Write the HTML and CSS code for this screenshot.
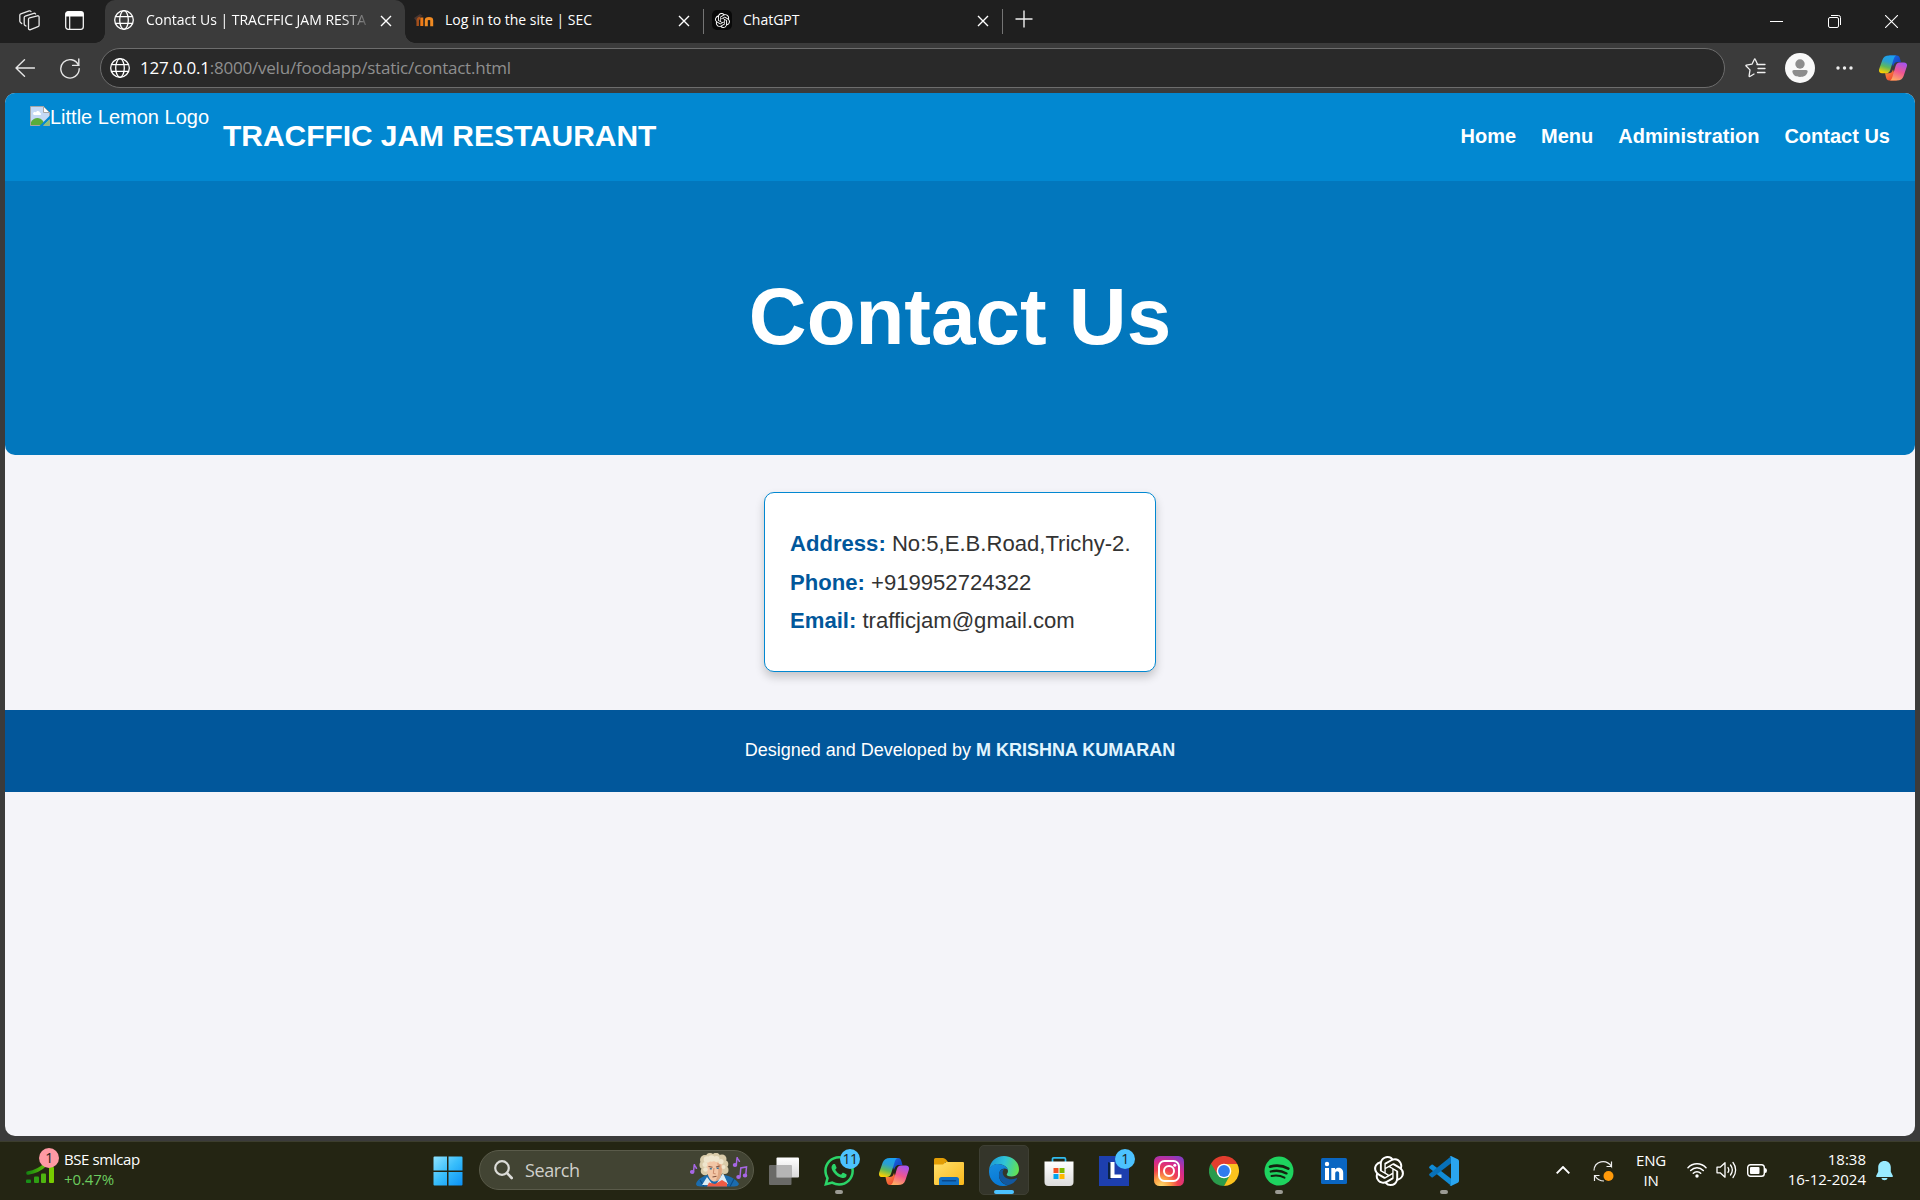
FILE: index.html
```
<!DOCTYPE html>
<html lang="en">
<head>
<meta charset="utf-8">
<title>Contact Us | TRACFFIC JAM RESTAURANT</title>
<link rel="stylesheet" href="styles.css">
</head>
<body>
<svg class="defs" width="0" height="0" aria-hidden="true">
  <defs>
    <linearGradient id="cpA" x1="0.6" y1="0" x2="0.3" y2="1"><stop offset="0" stop-color="#1aa0f0"/><stop offset=".35" stop-color="#2b9fd0"/><stop offset=".65" stop-color="#5fb95a"/><stop offset="1" stop-color="#ffd000"/></linearGradient>
    <linearGradient id="cpB" x1="0" y1="0" x2="1" y2="1"><stop offset="0" stop-color="#1c6fe8"/><stop offset="1" stop-color="#1236b8"/></linearGradient>
    <linearGradient id="cpC" x1="0.7" y1="0" x2="0.3" y2="1"><stop offset="0" stop-color="#a653ee"/><stop offset=".5" stop-color="#f0568f"/><stop offset="1" stop-color="#ffac62"/></linearGradient>
    <linearGradient id="cpD" x1="0" y1="0" x2="1" y2="1"><stop offset="0" stop-color="#ff9a3d"/><stop offset="1" stop-color="#e8302f"/></linearGradient>
    <symbol id="copilot" viewBox="0 0 30 27">
      <path fill="url(#cpB)" d="M11 0h8c2.300 0 3 1.500 3.600 3.800L23.500 7H20c-3 0-4 2-5 5z"/>
      <path fill="url(#cpD)" d="M19 27h-8c-2.300 0-3-1.500-3.600-3.800L6.500 19H10c3 0 4-1 5-4z"/>
      <path fill="url(#cpA)" d="M11 0h7.500C16.500.6 16 3 15.200 5.500L12.300 15c-.8 2.600-2 4-4.500 4H3.200C.5 19-.5 17.200.2 14.500L3.600 4.800C4.800 1.500 7 0 11 0z"/>
      <path fill="url(#cpC)" d="M19 27h-7.500c2-.6 2.500-3 3.300-5.500l2.900-10c.8-2.600 2-4 4.500-4h4.600c2.700 0 3.700 1.800 3 4.500l-3.400 10.200C25.200 25.500 23 27 19 27z"/>
    </symbol>
    <symbol id="globe" viewBox="0 0 20 20">
      <g fill="none" stroke="#fff" stroke-width="1.300"><circle cx="10" cy="10" r="9.300"/><ellipse cx="10" cy="10" rx="4.300" ry="9.300"/><path d="M1.500 6.700h17M1.500 13.300h17"/></g>
    </symbol>
    <symbol id="cross" viewBox="0 0 12 12"><path d="M1 1l10 10M11 1L1 11" stroke="#fff" stroke-width="1.400"/></symbol>
    <symbol id="knot" viewBox="0 0 24 24"><path fill="#fff" d="M22.2819 9.8211a5.9847 5.9847 0 0 0-.5157-4.9108 6.0462 6.0462 0 0 0-6.5098-2.9A6.0651 6.0651 0 0 0 4.9807 4.1818a5.9847 5.9847 0 0 0-3.9977 2.9 6.0462 6.0462 0 0 0 .7427 7.0966 5.98 5.98 0 0 0 .511 4.9107 6.051 6.051 0 0 0 6.5146 2.9001A5.9847 5.9847 0 0 0 13.2599 24a6.0557 6.0557 0 0 0 5.7718-4.2058 5.9894 5.9894 0 0 0 3.9977-2.9001 6.0557 6.0557 0 0 0-.7475-7.0729zm-9.022 12.6081a4.4755 4.4755 0 0 1-2.8764-1.0408l.1419-.0804 4.7783-2.7582a.7948.7948 0 0 0 .3927-.6813v-6.7369l2.02 1.1686a.071.071 0 0 1 .038.052v5.5826a4.504 4.504 0 0 1-4.4945 4.4944zm-9.6607-4.1254a4.4708 4.4708 0 0 1-.5346-3.0137l.142.0852 4.783 2.7582a.7712.7712 0 0 0 .7806 0l5.8428-3.3685v2.3324a.0804.0804 0 0 1-.0332.0615L9.74 19.9502a4.4992 4.4992 0 0 1-6.1408-1.6464zM2.3408 7.8956a4.485 4.485 0 0 1 2.3655-1.9728V11.6a.7664.7664 0 0 0 .3879.6765l5.8144 3.3543-2.0201 1.1685a.0757.0757 0 0 1-.071 0l-4.8303-2.7865A4.504 4.504 0 0 1 2.3408 7.872zm16.5963 3.8558L13.1038 8.364 15.1192 7.2a.0757.0757 0 0 1 .071 0l4.8303 2.7913a4.4944 4.4944 0 0 1-.6765 8.1042v-5.6772a.79.79 0 0 0-.407-.667zm2.0107-3.0231l-.142-.0852-4.7735-2.7818a.7759.7759 0 0 0-.7854 0L9.409 9.2297V6.8974a.0662.0662 0 0 1 .0284-.0615l4.8303-2.7866a4.4992 4.4992 0 0 1 6.6802 4.66zM8.3065 12.863l-2.02-1.1638a.0804.0804 0 0 1-.038-.0567V6.0742a4.4992 4.4992 0 0 1 7.3757-3.4537l-.142.0805L8.704 5.459a.7948.7948 0 0 0-.3927.6813zm1.0976-2.3654l2.602-1.4998 2.6069 1.4998v2.9994l-2.5974 1.4997-2.6067-1.4997Z"/></symbol>
  </defs>
</svg>

<div class="tabstrip">
  <div class="strip-tools">
    <svg width="21" height="21" viewBox="0 0 21 21" fill="none" stroke="#e8e8e8" stroke-width="1.300" stroke-linejoin="round" stroke-linecap="round"><path d="M9.500 9.200c0-.8.400-1.200 1.100-1.400l7.800-2c1-.2 1.700.2 1.700 1.200v8.200c0 .8-.4 1.300-1.100 1.500l-7.500 2.900c-1.200.4-2-.1-2-1.200z"/><path d="M7 16l-1-.6c-.6-.3-.8-.7-.8-1.400V7.600c0-.8.300-1.300 1-1.500l8.600-2.800c.8-.2 1.400 0 1.800.7"/><path d="M2.700 13.500l-1.200-1c-.5-.4-.7-.8-.7-1.400V5.300c0-.8.400-1.300 1-1.500L10.200.9c.8-.2 1.400 0 1.800.6"/></svg>
    <svg width="19" height="19" viewBox="0 0 19 19"><rect x=".7" y=".7" width="17.600" height="17.600" rx="2.500" fill="none" stroke="#f4f4f4" stroke-width="1.300"/><path d="M.5 5.500V3A2.500 2.500 0 0 1 3 .5h13A2.500 2.500 0 0 1 18.500 3v2.500z" fill="#fff"/><path d="M4.700 5v13" stroke="#f4f4f4" stroke-width="1.200"/></svg>
  </div>
  <div class="tab tab-active">
    <svg class="tab-icon" width="20" height="20"><use href="#globe"/></svg>
    <span class="tab-title fade">Contact Us | TRACFFIC JAM RESTA</span>
    <svg class="tab-close" width="12" height="12"><use href="#cross"/></svg>
  </div>
  <div class="tab tab-second">
    <svg class="tab-icon" width="20" height="20" viewBox="0 0 20 20" fill="none"><path d="M0 8l6-4 3 2-6 2v4" fill="#4a3630"/><path d="M3.700 16V11c0-2 1-3 2.500-3" stroke="#a5501c" stroke-width="2.500"/><path d="M7.800 16V7.500" stroke="#ef7b18" stroke-width="3"/><path d="M12.300 16.300V10.200c0-2.200 5.400-2.200 5.400 0v6.100" stroke="#f08a22" stroke-width="3"/></svg>
    <span class="tab-title">Log in to the site | SEC</span>
    <svg class="tab-close" width="12" height="12"><use href="#cross"/></svg>
  </div>
  <div class="tab tab-third">
    <span class="gpt-icon"><svg width="15" height="15"><use href="#knot"/></svg></span>
    <span class="tab-title">ChatGPT</span>
    <svg class="tab-close" width="12" height="12"><use href="#cross"/></svg>
  </div>
  <svg class="new-tab" width="18" height="18" viewBox="0 0 18 18"><path d="M9 .5v17M.5 9h17" stroke="#eee" stroke-width="1.400"/></svg>
  <div class="window-controls">
    <svg width="13" height="13" viewBox="0 0 13 13"><path d="M0 6.500h13" stroke="#fff"/></svg>
    <svg width="13" height="13" viewBox="0 0 13 13" fill="none" stroke="#fff"><rect x=".5" y="2.500" width="10" height="10" rx="1.500"/><path d="M3 .5h7.500a2 2 0 0 1 2 2V10"/></svg>
    <svg width="13" height="13" viewBox="0 0 13 13"><path d="M0 0l13 13M13 0L0 13" stroke="#fff" stroke-width="1.100"/></svg>
  </div>
</div>

<div class="toolbar">
  <svg class="back" width="20" height="18" viewBox="0 0 20 18" fill="none" stroke="#e6e6e6" stroke-width="1.400" stroke-linecap="round" stroke-linejoin="round"><path d="M9.500.8L1 9l8.500 8.200M1 9h18.500"/></svg>
  <svg class="reload" width="20" height="21" viewBox="0 0 20 21" fill="none" stroke="#e6e6e6" stroke-width="1.400" stroke-linecap="round"><path d="M18.500 7.300A9.200 9.200 0 1 0 19.200 10.700"/><path d="M18.800 1v6.400h-6.200"/></svg>
  <div class="address">
    <svg width="20" height="20"><use href="#globe"/></svg>
    <span class="url"><span class="host">127.0.0.1</span>:8000/velu/foodapp/static/contact.html</span>
  </div>
  <svg class="fav" width="21" height="20" viewBox="0 0 21 20" fill="none" stroke="#f0f0f0" stroke-width="1.300" stroke-linecap="round" stroke-linejoin="round"><path d="M12.500 6.300l-2.300-5c-.2-.5-.6-.5-.8 0L7 6.200l-5.600.9c-.6.100-.7.500-.3.900L5 11.900l-.9 6c0 .6.400.8.800.6L9 16"/><path d="M12 6.500h8M13 10.500h7M12.500 14.500H20"/></svg>
  <svg class="avatar" width="30" height="30" viewBox="0 0 30 30"><circle cx="15" cy="15" r="15" fill="#f8f8f8"/><circle cx="15" cy="11" r="4.700" fill="#8c8c8c"/><path d="M9 17h12c1.200 0 1.800.7 1.600 1.800-.6 3.500-3.600 5.200-7.600 5.200s-7-1.700-7.600-5.200C7.200 17.700 7.800 17 9 17z" fill="#8c8c8c"/></svg>
  <svg class="dots" width="17" height="4" viewBox="0 0 17 4" fill="#eee"><circle cx="2" cy="2" r="1.700"/><circle cx="8.500" cy="2" r="1.700"/><circle cx="15" cy="2" r="1.700"/></svg>
  <svg class="side-copilot" width="28" height="26"><use href="#copilot"/></svg>
</div>

<div class="viewport">
  <header class="site-header">
    <div class="brand">
      <div class="logo-alt">
        <svg width="20" height="20" viewBox="0 0 20 20"><path d="M.5.5h13l6 6v13H.500z" fill="#c5d9f5" stroke="#a7a7a7"/><path d="M13.500.5v6h6z" fill="#fff" stroke="#a7a7a7"/><path d="M3 8c0-2 2-2.500 3-1.500C7 4 10 5 10 7c1.500 0 1.500 2 0 2H4z" fill="#fff"/><path d="M1 19v-3c3-5 9-5 12-1l2 4z" fill="#5aad3c"/><path d="M9.500 20L20 9.500V13l-7 7z" fill="#0288d1"/><path d="M13 19.500l6.500-6v6z" fill="#8bc07c"/></svg><span>Little Lemon Logo</span>
      </div>
      <div class="site-name">TRACFFIC JAM RESTAURANT</div>
    </div>
    <nav class="site-nav"><a>Home</a><a>Menu</a><a>Administration</a><a>Contact Us</a></nav>
  </header>
  <section class="hero"><h1>Contact Us</h1></section>
  <main class="content">
    <div class="card">
      <p><strong>Address:</strong> No:5,E.B.Road,Trichy-2.</p>
      <p><strong>Phone:</strong> +919952724322</p>
      <p><strong>Email:</strong> trafficjam@gmail.com</p>
    </div>
  </main>
  <footer class="site-footer">Designed and Developed by&nbsp;<strong>M KRISHNA KUMARAN</strong></footer>
</div>

<div class="taskbar">
  <div class="widget">
    <div class="widget-icon">
      <svg width="29" height="20" viewBox="0 0 29 20"><defs><linearGradient id="gr" gradientUnits="userSpaceOnUse" x1="0" y1="0" x2="28" y2="0"><stop stop-color="#128212"/><stop offset="1" stop-color="#7fd400"/></linearGradient></defs><path d="M2 10C9 9 15 6 20 1" fill="none" stroke="url(#gr)" stroke-width="3.600" stroke-linecap="round"/><rect x="0" y="16.500" width="5" height="3.500" rx="1" fill="#189018"/><rect x="8" y="13.500" width="5" height="6.500" rx="1" fill="#2fa013"/><rect x="15" y="10.500" width="5" height="9.500" rx="1" fill="#4fb510"/><rect x="23" y="4" width="5" height="16" rx="1" fill="#78cc00"/></svg>
      <span class="badge pink">1</span>
    </div>
    <div class="widget-text"><span>BSE smlcap</span><span class="gain">+0.47%</span></div>
  </div>
  <div class="apps">
    <div class="app start"><svg width="30" height="30" viewBox="0 0 30 30"><defs><linearGradient id="win" x2="1" y2="1"><stop stop-color="#8fe3ff"/><stop offset=".5" stop-color="#37bdfb"/><stop offset="1" stop-color="#0a90f5"/></linearGradient></defs><path fill="url(#win)" d="M.5 1.500a1 1 0 0 1 1-1H14V14.500H.5zM15.500.5h13a1 1 0 0 1 1 1v13h-14zM.5 16H14v13.500H1.500a1 1 0 0 1-1-1zM15.500 16h14v12.500a1 1 0 0 1-1 1h-13z"/></svg></div>
    <div class="search">
      <svg width="19" height="20" viewBox="0 0 19 20" fill="none" stroke="#dcdcd8" stroke-width="2.200" stroke-linecap="round"><circle cx="8" cy="8" r="6.800"/><path d="M13 13l4.700 5" stroke-width="2.600"/></svg>
      <span>Search</span>
      <svg class="composer" width="58" height="34" viewBox="0 0 58 34">
        <path d="M6 31c1-4 5-7 11-9h17c7 1 13 5 15 9q-1 2.500-5 2.500H11Q6 33.500 6 31z" fill="#1b6cae"/>
        <path d="M10 27l4 6.500M44 26l-4 7.500" stroke="#0e4d86" stroke-width="1.200"/>
        <path d="M12 32l5-8 6 8zM38 31l-5-11-6 10z" fill="#dcecf4"/>
        <path d="M17 33.500l2-4 6 1.500 7-4 5 3v3.500z" fill="#ee5b45"/>
        <g fill="#d9cba9"><circle cx="15" cy="7" r="5"/><circle cx="13.500" cy="12" r="4"/><circle cx="15" cy="18" r="4.300"/><circle cx="20" cy="4" r="4"/><circle cx="26" cy="3.800" r="4"/><circle cx="32" cy="6" r="4.500"/><circle cx="34.500" cy="11" r="3.800"/><circle cx="34.500" cy="17" r="4"/></g>
        <path d="M17 9c4-4 12-4 14.500 0 1.500 5 1.500 10-.5 14-1.500 4-5 6-7.500 5.500-3-1-5-4-6-8-.8-4-1.200-8-.5-11.500z" fill="#f2c6a6"/>
        <path d="M27 10c3 0 4.500 2 4.800 4 .2 4 0 7-1.500 10-1 2-3 4-5 4.300 3-5 4-11 1.700-18.300z" fill="#dda581"/>
        <g fill="#efe5cd"><circle cx="17" cy="6.500" r="3.300"/><circle cx="21.500" cy="5.500" r="3.300"/><circle cx="26.500" cy="6" r="3"/><circle cx="31" cy="8.500" r="2.600"/><circle cx="15" cy="11.500" r="2.500"/><circle cx="15.500" cy="16.500" r="2.300"/><circle cx="33.500" cy="14" r="2"/></g>
        <path d="M18.500 13.500l4 .8M26 14l3.700-1M22.500 24l4-.7" stroke="#80503c" stroke-width="1.100" fill="none"/><path d="M19.800 15.700h2M26.700 15.300h2" stroke="#3d789c" stroke-width="1.600"/><path d="M24 15l-.7 5.500 2.400.4" stroke="#cc8c6b" fill="none"/>
        <g fill="#a767e5" stroke="#a767e5" stroke-width="1.500"><ellipse cx="2.200" cy="19" rx="1.500" ry="1.200"/><path d="M3.500 19l.8-8c0 3 2 2 2.200 5" fill="none"/><ellipse cx="45" cy="12" rx="1.500" ry="1.200"/><path d="M46.300 12l.8-8c0 3 2 2 2.400 5" fill="none"/><ellipse cx="48.500" cy="24" rx="1.500" ry="1.200"/><ellipse cx="55" cy="22.500" rx="1.500" ry="1.200"/><path d="M50 24l.8-9 5.700-1-.8 8.500" fill="none"/></g>
      </svg>
    </div>
    <div class="app"><svg width="30" height="28" viewBox="0 0 30 28"><defs><linearGradient id="tv" x2="0" y2="1"><stop stop-color="#fff"/><stop offset="1" stop-color="#d9d9d9"/></linearGradient></defs><rect x="7.500" y=".5" width="22.500" height="20" rx="1" fill="url(#tv)"/><rect x="0" y="8" width="22.500" height="20" rx="1" fill="#777" opacity=".85"/><path d="M7.500 8H22.500v12.500h-15z" fill="#b5b5b5"/></svg></div>
    <div class="app"><svg width="30" height="30" viewBox="0 0 24 24"><path fill="#2bd468" d="M17.472 14.382c-.297-.149-1.758-.867-2.030-.967-.273-.099-.471-.148-.67.150-.197.297-.767.966-.94 1.164-.173.199-.347.223-.644.075-.297-.15-1.255-.463-2.390-1.475-.883-.788-1.480-1.761-1.653-2.059-.173-.297-.018-.458.130-.606.134-.133.298-.347.446-.52.149-.174.198-.298.298-.497.099-.198.050-.371-.025-.52-.075-.149-.669-1.612-.916-2.207-.242-.579-.487-.5-.669-.51-.173-.008-.371-.01-.57-.01-.198 0-.52.074-.792.372-.272.297-1.040 1.016-1.040 2.479 0 1.462 1.065 2.875 1.213 3.074.149.198 2.096 3.200 5.077 4.487.709.306 1.262.489 1.694.625.712.227 1.360.195 1.871.118.571-.085 1.758-.719 2.006-1.413.248-.694.248-1.289.173-1.413-.074-.124-.272-.198-.57-.347m-5.421 7.403h-.004a9.870 9.870 0 0 1-5.031-1.378l-.361-.214-3.741.982.998-3.648-.235-.374a9.860 9.860 0 0 1-1.510-5.260c.001-5.450 4.436-9.884 9.888-9.884 2.640 0 5.122 1.030 6.988 2.898a9.825 9.825 0 0 1 2.893 6.994c-.003 5.450-4.437 9.884-9.885 9.884m8.413-18.297A11.815 11.815 0 0 0 12.050 0C5.495 0 .16 5.335.157 11.892c0 2.096.547 4.142 1.588 5.945L.057 24l6.305-1.654a11.882 11.882 0 0 0 5.683 1.448h.005c6.554 0 11.890-5.335 11.893-11.893a11.821 11.821 0 0 0-3.480-8.413z"/></svg><span class="badge blue">11</span><i class="running"></i></div>
    <div class="app"><svg width="30" height="27"><use href="#copilot"/></svg></div>
    <div class="app"><svg width="30" height="27" viewBox="0 0 30 27"><defs><linearGradient id="fo" x2="1" y2="1"><stop stop-color="#ffe06c"/><stop offset="1" stop-color="#fab81a"/></linearGradient></defs><path d="M0 9V1.500Q0 0 1.500 0H9q1.500 0 3 1.500L14 4h-3v5z" fill="#e29d05"/><path d="M0 6.500h9l3-2.500h17q1 0 1 1v20.500q0 1.500-1.500 1.500h-27Q0 27 0 25.500z" fill="url(#fo)"/><path d="M5 27v-5.500q0-2.500 2.500-2.500h15q2.500 0 2.500 2.500V27z" fill="#0f6fc4"/><path d="M8.500 22.800h13" stroke="#0b4889" stroke-width="1.500" stroke-linecap="round"/></svg></div>
    <div class="app"><div class="active-plate"></div><svg class="above" width="30" height="30" viewBox="0 0 30 30"><defs><linearGradient id="e1" x1="0" y1=".3" x2="1" y2=".5"><stop stop-color="#1a96d6"/><stop offset=".5" stop-color="#2fc4d8"/><stop offset="1" stop-color="#62e254"/></linearGradient><linearGradient id="e2" x2=".3" y2="1"><stop stop-color="#168cdf"/><stop offset="1" stop-color="#0879d5"/></linearGradient></defs><path fill="url(#e1)" d="M0 14C1 5.500 7 0 15 0c9 0 15 6.500 15 13.500 0 4.500-3.500 7-7.500 7-3 0-4.800-1-4.800-2 0-.8 1.300-1.400 1.300-3.500C19 11 14 8 9 8c-4 0-7.500 2.500-9 6z"/><path fill="url(#e2)" d="M0 14.500C.5 10.500 4.500 8 9 8c5 0 10 3 10 7 0-3-6.500-3.800-8.500 1C8.500 21.500 12 28 19 29.300 8 32.500-.5 24.500 0 14.500z"/><path fill="#12589f" d="M10.500 16c-2 5.500 1.500 11.500 8.500 13.300 4-1 7-3.300 9-6.300.4-.7-.1-1-.8-.7-6 2.700-13.500-.3-13.500-5.800 0-1.500.7-2.800 1.800-3.500-2 0-4 .8-5 3z"/></svg><i class="running current"></i></div>
    <div class="app"><svg width="30" height="30" viewBox="0 0 30 30"><defs><linearGradient id="st" x2="0" y2="1"><stop stop-color="#fff"/><stop offset="1" stop-color="#dcdcdc"/></linearGradient></defs><path d="M8.500 7V3q0-1.200 1.200-1.200h10.600q1.200 0 1.200 1.200v4" fill="none" stroke="#31bcf0" stroke-width="1.700"/><path d="M.5 5.500h29V26q0 4-4 4h-21q-4 0-4-4z" fill="url(#st)"/><path d="M9.500 12h5v5h-5z" fill="#f25022"/><path d="M15.500 12h5v5h-5z" fill="#7fba00"/><path d="M9.500 18h5v5h-5z" fill="#00a4ef"/><path d="M15.500 18h5v5h-5z" fill="#ffb900"/></svg></div>
    <div class="app"><svg width="30" height="30" viewBox="0 0 30 30"><path fill="#1d3fae" d="M0 0h30v30H0z"/><path d="M9 6v17h3l2-5V8z" fill="#0b2344"/><path d="M11.500 6h4v12.500h7V22h-11z" fill="#fff"/></svg><span class="badge blue">1</span></div>
    <div class="app"><svg width="30" height="30" viewBox="0 0 30 30"><defs><radialGradient id="ig" cx=".25" cy="1" r="1.100"><stop stop-color="#ffdc70"/><stop offset=".25" stop-color="#fda045"/><stop offset=".5" stop-color="#f0414f"/><stop offset=".75" stop-color="#d52a8d"/><stop offset="1" stop-color="#8a3bc0"/></radialGradient></defs><rect width="30" height="30" rx="5.500" fill="url(#ig)"/><g fill="none" stroke="#fff" stroke-width="2"><rect x="5" y="5" width="20" height="20" rx="5.500"/><circle cx="15" cy="15" r="5"/></g><circle cx="20.800" cy="9.300" r="1.500" fill="#fff"/></svg></div>
    <div class="app"><svg width="30" height="30" viewBox="0 0 30 30"><path fill="#2a9b4c" d="M15 15L2 7.500A15 15 0 0 0 15 30l7-11z"/><path fill="#fcc31e" d="M15 8h13.300A15 15 0 0 1 15 30l6.200-11.300z"/><path fill="#e23d2e" d="M2 7.500A15 15 0 0 1 28.300 8H15L8.800 18.800z"/><circle cx="15" cy="15" r="7.300" fill="#fff"/><circle cx="15" cy="15" r="5.900" fill="#2f7bee"/></svg></div>
    <div class="app"><svg width="30" height="30" viewBox="0 0 30 30"><circle cx="15" cy="15" r="14.500" fill="#1ed35f"/><g fill="none" stroke="#14210f" stroke-linecap="round"><path d="M6 10.700c6-1.600 13-1 18.300 2" stroke-width="2.700"/><path d="M6.800 15.500c5-1.300 11-.8 15.700 1.900" stroke-width="2.300"/><path d="M7.500 20c4.500-1 9-.5 13 1.700" stroke-width="1.900"/></g></svg><i class="running"></i></div>
    <div class="app"><svg width="26" height="26" viewBox="0 0 26 26"><rect width="26" height="26" rx="1.500" fill="#0a66c2"/><g fill="#fff"><circle cx="6" cy="6" r="2.200"/><path d="M4 10h4v12H4zM10.300 10h3.700v1.700c2-3.300 8.200-2.500 8.200 3V22h-4v-6.500c0-3-4-3-4 0V22h-3.900z"/></g></svg></div>
    <div class="app"><svg width="30" height="30"><use href="#knot"/></svg></div>
    <div class="app"><svg width="30" height="30" viewBox="0 0 30 30"><path d="M.5 10.500l2-1.800q.7-.5 1.400 0L22.500 23v7L.5 12.200q-.8-.8 0-1.700z" fill="#118bd6"/><path d="M.5 19.500l2 1.800q.7.5 1.400 0L22.500 7V0L.5 17.800q-.8.800 0 1.700z" fill="#0871b9"/><path d="M20.500 29.500q1 .8 2 .3l6.300-3q1.200-.6 1.200-2V5.200q0-1.400-1.200-2L22.500.2q-1-.4-2 .3 1.500-.5 1.500 1.500v26q0 2-1.500 1.500z" fill="#2aa5f0"/></svg><i class="running"></i></div>
  </div>
  <div class="tray">
    <svg class="chev" width="14" height="8" viewBox="0 0 14 8" fill="none" stroke="#fff" stroke-width="1.900"><path d="M.7 7.300L7 1l6.300 6.300"/></svg>
    <svg class="sync" width="22" height="22" viewBox="0 0 22 22" fill="none" stroke="#eee" stroke-width="1.200"><path d="M1 10.500C1.500 1 13-1.500 18.500 6.500V1.500M19 6.500h-5.500"/><path d="M1.500 21v-5.500H6.500M2 16c2 3 5 5 9 5"/><circle cx="15.500" cy="16" r="5" fill="#ff9a0a" stroke="none"/></svg>
    <div class="lang"><span>ENG</span><span>IN</span></div>
    <svg class="wifi" width="20" height="16" viewBox="0 0 20 16" fill="none" stroke="#fff" stroke-width="1.500" stroke-linecap="round"><path d="M1 5.700c5-5.300 13-5.300 18 0M3.700 8.500c3.600-3.700 9-3.700 12.600 0M6.300 11.300c2.100-2.200 5.300-2.200 7.400 0"/><circle cx="10" cy="14" r="1.700" fill="#fff" stroke="none"/></svg>
    <svg class="vol" width="21" height="18" viewBox="0 0 21 18" fill="none" stroke="#fff" stroke-width="1.300" stroke-linecap="round" stroke-linejoin="round"><path d="M1 6.200h3.200L9 1.800v14.400l-4.800-4.400H1zM12 6.500c1 1.500 1 3.500 0 5M14.500 4c2.200 3 2.200 7 0 10M17 1.500c3.500 4.500 3.500 10.500 0 15"/></svg>
    <svg class="bat" width="21" height="13" viewBox="0 0 21 13"><rect x=".7" y=".7" width="16.600" height="11.600" rx="2.800" fill="none" stroke="#fff" stroke-width="1.400"/><rect x="3" y="3" width="9.500" height="7" rx="1" fill="#fff"/><path d="M18 4q2 0 2 2.500T18 9z" fill="#fff"/></svg>
    <div class="clock"><span>18:38</span><span>16-12-2024</span></div>
    <svg class="bell" width="17" height="20" viewBox="0 0 17 20" fill="#99ebff"><path d="M8.500 0c3.700 0 6.300 2.700 6.300 6.300v4.500l2 4c.3.700 0 1.200-.7 1.200H.9c-.7 0-1-.5-.7-1.200l2-4V6.300C2.200 2.700 4.800 0 8.500 0zM5.500 17h6c-.4 3-5.600 3-6 0z"/></svg>
  </div>
</div>
</body>
</html>
```
FILE: styles.css
```
* { box-sizing: border-box; }
body {
  margin: 0;
  width: 1920px;
  height: 1200px;
  overflow: hidden;
  display: flex;
  flex-direction: column;
  background: #3b3b3b;
  font-family: "Open Sans", "Noto Sans", sans-serif;
  color: #fff;
}
svg { display: block; flex: none; }
.defs { position: absolute; }

/* Browser tab strip */
.tabstrip {
  height: 43px;
  flex: none;
  display: flex;
  background: #1f1f1f;
}
.strip-tools {
  width: 105px;
  display: flex;
  gap: 25px;
  padding: 10px 0 0 19px;
  background: #1f1f1f;
}
.strip-tools svg:last-child { margin-top: 1px; }
.tab {
  display: flex;
  align-items: center;
  position: relative;
  padding-bottom: 3px;
  font-size: 14px;
}
.tab-title { flex: 1; white-space: nowrap; overflow: hidden; line-height: 22px; }
.tab-close { margin-top: 2px; }
.tab-active {
  width: 300px;
  padding-left: 9px;
  padding-right: 13px;
  background: #3b3b3b;
  border-radius: 10px 10px 0 0;
}
.tab-active::before,
.tab-active::after {
  content: "";
  position: absolute;
  bottom: 0;
  width: 10px;
  height: 10px;
}
.tab-active::before { left: -10px; background: radial-gradient(circle at 0 0, #1f1f1f 9.500px, #3b3b3b 10px); }
.tab-active::after { right: -10px; background: radial-gradient(circle at 100% 0, #1f1f1f 9.500px, #3b3b3b 10px); }
.tab-active .tab-title { margin: 0 10px 0 12px; }
.fade { -webkit-mask-image: linear-gradient(90deg, #000 196px, transparent 226px); mask-image: linear-gradient(90deg, #000 196px, transparent 226px); }
.tab-second { width: 299px; padding-left: 9px; padding-right: 14px; }
.tab-second .tab-title { margin-left: 11px; }
.tab-third { width: 299px; padding-left: 8px; padding-right: 14px; }
.tab-third .tab-title { margin-left: 11px; }
.tab-second::after,
.tab-third::after {
  content: "";
  position: absolute;
  right: 0;
  top: 9px;
  width: 1px;
  height: 25px;
  background: #747474;
}
.gpt-icon {
  width: 20px;
  height: 20px;
  border-radius: 5px;
  background: #090909;
  display: grid;
  place-items: center;
}
.new-tab { margin: 10px 0 0 12px; }
.window-controls { margin-left: auto; padding: 15px 22px 0 0; display: flex; gap: 44.500px; }

/* Address row */
.toolbar { height: 50px; flex: none; display: flex; align-items: center; padding-left: 15px; }
.back { margin-right: 25px; }
.reload { margin-right: 20px; }
.address {
  width: 1625px;
  height: 40px;
  border: 1px solid #6d6d6d;
  border-radius: 20px;
  background: #292929;
  display: flex;
  align-items: center;
  padding-left: 9px;
  gap: 10px;
}
.url { font-size: 17px; letter-spacing: -0.22px; color: #8f8f8f; line-height: 24px; }
.host { color: #fff; }
.fav { margin-left: 20px; }
.avatar { margin-left: 19px; }
.dots { margin-left: 21px; }
.side-copilot { margin-left: 26px; }

/* Web page */
.viewport {
  height: 1043px;
  flex: none;
  margin: 0 5px;
  border-radius: 10px;
  overflow: hidden;
  background: #f4f4f9;
  font-family: "Liberation Sans", Arial, sans-serif;
}
.site-header {
  height: 88px;
  padding: 12px 25px;
  display: flex;
  justify-content: space-between;
  background: #0288d1;
}
.brand { display: flex; gap: 14px; }
.logo-alt { display: flex; font-size: 20px; line-height: 24px; }
.logo-alt svg { margin-top: 1px; }
.site-name { font-size: 30px; font-weight: 700; line-height: 62px; letter-spacing: -0.05px; }
.site-nav { display: flex; gap: 25px; font-size: 20px; font-weight: 700; line-height: 62px; }
.hero {
  height: 274px;
  display: flex;
  align-items: center;
  justify-content: center;
  padding-bottom: 2px;
  background: #0277bd;
  border-radius: 0 0 10px 10px;
}
.hero h1 { margin: 0; font-size: 80px; line-height: 92px; }
.content { height: 255px; display: flex; align-items: flex-start; justify-content: center; padding-top: 37px; }
.card {
  width: 392px;
  height: 180px;
  padding: 32px 25px;
  background: #fff;
  border: 1px solid #0288d1;
  border-radius: 10px;
  box-shadow: 0 5px 10px rgba(0, 0, 0, 0.2);
  color: #333;
  font-size: 22.100px;
}
.card p { margin: 0; line-height: 38.500px; white-space: nowrap; }
.card strong { color: #01579b; }
.site-footer {
  height: 82px;
  display: flex;
  align-items: center;
  justify-content: center;
  padding-bottom: 2px;
  background: #01579b;
  font-size: 18px;
}
.site-footer strong { color: #e1f5fe; }

/* Desktop taskbar */
.taskbar {
  height: 59px;
  flex: none;
  display: flex;
  margin-top: 5px;
  background: #242513;
  border-top: 1px solid #3c3d2d;
  font-size: 15px;
  letter-spacing: -0.4px;
}
.widget { width: 419px; display: flex; padding-left: 26px; }
.widget-icon { width: 38px; position: relative; padding-top: 21px; }
.widget-text, .lang, .clock { display: flex; flex-direction: column; line-height: 20px; padding-top: 7px; }
.gain { color: #6ccb5f; letter-spacing: -0.1px; }
.badge {
  position: absolute;
  width: 20px;
  height: 20px;
  border-radius: 50%;
  display: grid;
  place-items: center;
  color: #1c1c1c;
  font-size: 14px;
  line-height: 20px;
}
.pink { left: 13px; top: 6px; background: #ff99a4; }
.blue { right: 6px; top: 7px; background: #4cc2ff; }
.apps { display: flex; }
.app { width: 55px; position: relative; display: grid; place-items: center; }
.start { padding-left: 2px; }
.above { position: relative; }
.active-plate {
  position: absolute;
  left: 3px;
  top: 3px;
  width: 50px;
  height: 50px;
  border-radius: 5px;
  background: #34352a;
  border: 1px solid #3e3f33;
}
.running { position: absolute; left: 24px; bottom: 6px; width: 8px; height: 4px; border-radius: 2px; background: #9b9b94; }
.current { left: 18px; width: 20px; background: #4cc2ff; }
.search {
  width: 275px;
  height: 40px;
  margin: 8px 2px 0 5px;
  border: 1px solid #5a5b4a;
  border-radius: 20px;
  background: #424433;
  display: flex;
  align-items: center;
  padding-left: 14px;
  font-size: 18px;
  color: #d0d0cb;
}
.search span { margin-left: 12px; }
.composer { margin-left: auto; margin-right: 5px; }
.tray { flex: 1; display: flex; padding-left: 85px; }
.chev { margin: 24px 23px 0 0; }
.sync { margin: 18px 20px 0 0; }
.lang { width: 32px; align-items: center; margin-right: 20px; padding-top: 8px; letter-spacing: -0.2px; }
.wifi { margin: 20px 9px 0 0; }
.vol { margin: 19px 10px 0 0; }
.bat { margin: 22px 0 0; }
.clock { width: 98px; align-items: flex-end; margin-right: 10px; letter-spacing: 0; }
.bell { margin-top: 19px; }
```
